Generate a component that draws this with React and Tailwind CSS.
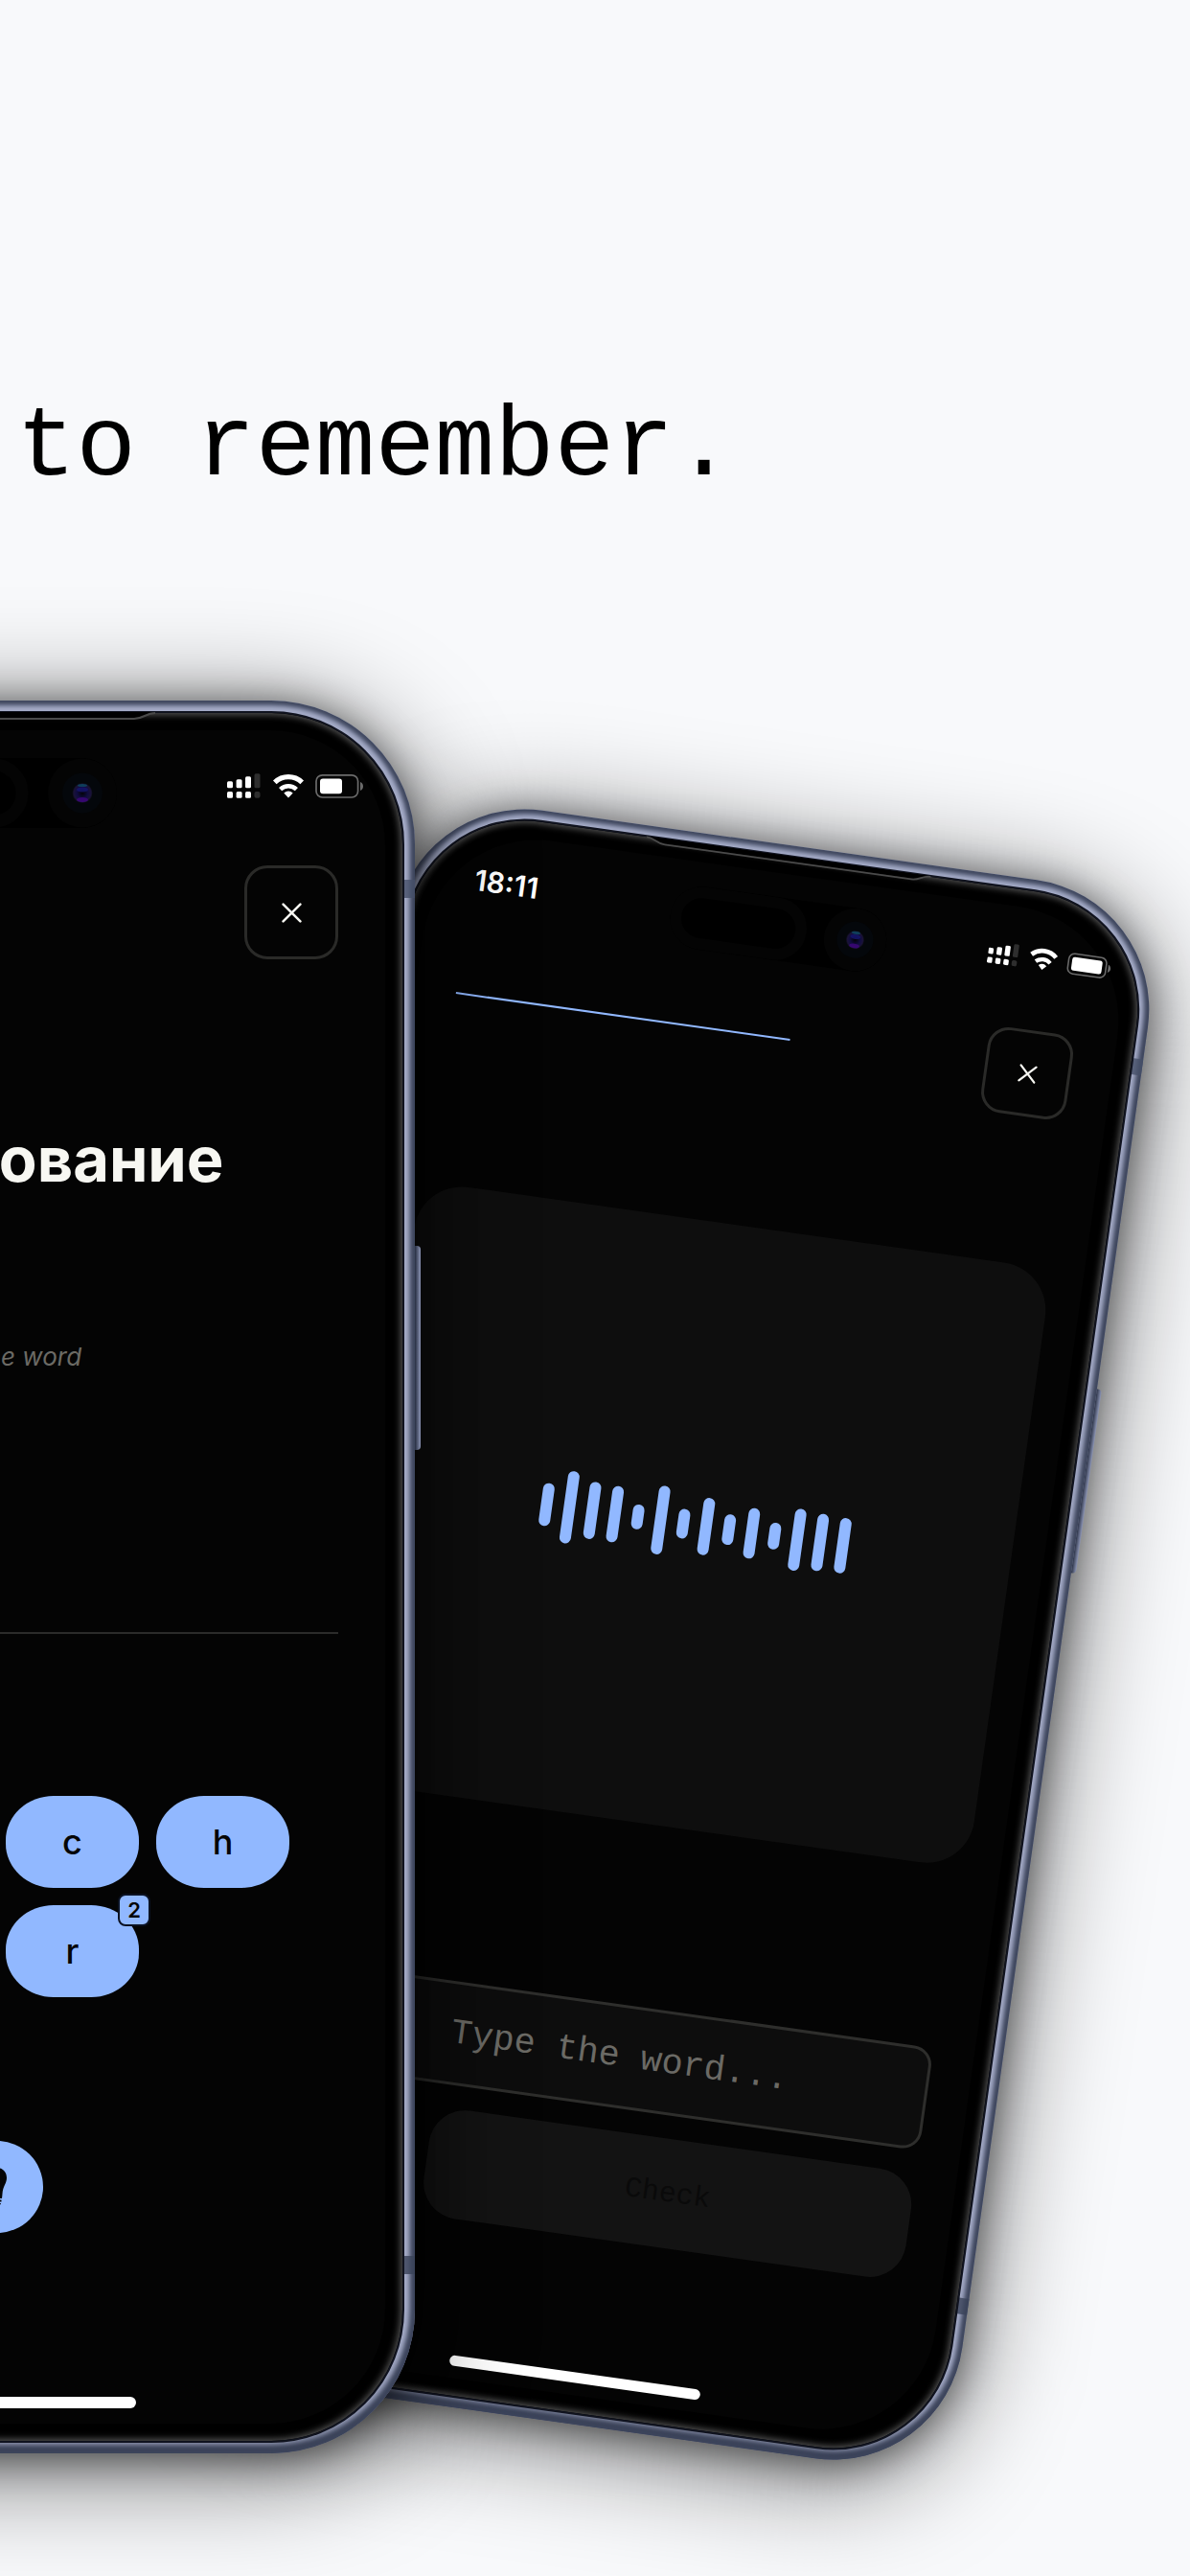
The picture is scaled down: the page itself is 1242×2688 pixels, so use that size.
import clsx from 'clsx';

const LETTERS = [
  { char: 's', count: 1 },
  { char: 'e', count: 2 },
  { char: 'c', count: 1 },
  { char: 'h', count: 1 },
  { char: 'a', count: 1 },
  { char: 'r', count: 2 },
];

const WAVE = [45, 76, 60, 59, 26, 72, 31, 60, 32, 53, 28, 65, 60, 58];

function StatusIcons({ level, className }) {
  return (
    <svg viewBox="0 0 143 26" className={className} fill="none" aria-hidden="true">
      <g fill="#fff">
        <rect x="0" y="8.3" width="6" height="7" rx="1.5" />
        <rect x="9.6" y="6.3" width="6" height="9" rx="1.5" />
        <rect x="19" y="3.3" width="6" height="12" rx="1.5" />
        <rect x="0" y="19" width="6" height="6.7" rx="1.5" />
        <rect x="9.6" y="19" width="6" height="6.7" rx="1.5" />
        <rect x="19" y="19" width="6" height="6.7" rx="1.5" />
      </g>
      <g fill="#2e2e2e">
        <rect x="28.5" y="0.3" width="6" height="15" rx="1.5" />
        <rect x="28.5" y="19" width="6" height="6.7" rx="2" />
      </g>
      <path d="M49.8 9.3A20.4 20.4 0 0 1 78.2 9.3" stroke="#fff" strokeWidth="5.2" />
      <path d="M55.6 16.6A12.4 12.4 0 0 1 72.4 16.6" stroke="#fff" strokeWidth="4.6" />
      <path d="M59.3 20.4Q64 16.4 68.7 20.4L64 25.4Z" fill="#fff" />
      <rect x="93" y="1.8" width="43.6" height="23.2" rx="6.5" stroke="#6b6b6b" strokeWidth="1.7" />
      <rect x="97" y="5.6" width={level} height="15.6" rx="3" fill="#fff" />
      <path d="M139 9C143 10.5 143 16.5 139 18Z" fill="#6b6b6b" />
    </svg>
  );
}

function Island({ className }) {
  return (
    <svg viewBox="0 0 250 73" className={className} aria-hidden="true">
      <defs>
        <radialGradient id="lens" cx="50%" cy="50%" r="50%">
          <stop offset="0" stopColor="#030308" />
          <stop offset="0.55" stopColor="#100c40" />
          <stop offset="0.85" stopColor="#1a1238" />
          <stop offset="1" stopColor="#0a0c14" />
        </radialGradient>
      </defs>
      <rect width="250" height="73" rx="36.5" fill="#000" />
      <rect x="6" y="7" width="145" height="59" rx="29.5" fill="#000" stroke="#040404" strokeWidth="13" />
      <circle cx="214" cy="36.5" r="36" fill="#040404" />
      <circle cx="214" cy="36.5" r="21" fill="#04070b" />
      <circle cx="214" cy="36.5" r="10.5" fill="url(#lens)" />
      <ellipse cx="214" cy="33" rx="6" ry="2.6" fill="#15156e" opacity="0.8" />
      <ellipse cx="214" cy="28.5" rx="5" ry="1.6" fill="#0d4a63" opacity="0.8" />
      <ellipse cx="214" cy="43.5" rx="6" ry="2.6" fill="#3a0775" opacity="0.9" />
    </svg>
  );
}

function Speaker({ className }) {
  return (
    <svg viewBox="0 0 330 9" className={className} aria-hidden="true">
      <path d="M0 0H330C320 1 318 6 308 6H22C12 6 10 1 0 0Z" fill="#000" />
      <path d="M0 1C10 1 12 7 22 7H308C318 7 320 1 330 1" fill="none" stroke="#4a4a4a" strokeWidth="2" />
    </svg>
  );
}

function CloseButton({ className, iconClassName }) {
  return (
    <button type="button" aria-label="Close" className={clsx('flex shrink-0 items-center justify-center border-[#2a2a28]', className)}>
      <svg viewBox="0 0 20 20" className={iconClassName} fill="none" stroke="#f7f7f2" strokeWidth="2.4" strokeLinecap="round">
        <path d="M1.5 1.5l17 17M18.5 1.5l-17 17" />
      </svg>
    </button>
  );
}

// Metal rim, antenna lines, side key and glass. The screen content goes on top.
function Phone({ className, rim, glass, bandTop, bandBottom, sideKey, speaker, island, children }) {
  return (
    <div className={clsx('relative shrink-0', className)}>
      <div className={clsx('absolute inset-0 translate-y-4 bg-black/60 blur-[58px]', rim)} />
      <div className={clsx('absolute inset-0 translate-y-1 bg-black/50 blur-[20px]', rim)} />
      <div className={clsx('absolute bg-[linear-gradient(90deg,#6f7793,#2d3448_55%,#8c95b5)]', sideKey)} />
      <div className={clsx('absolute inset-0 bg-[#a5acc8] shadow-[inset_0_0_5px_5px_#3d455c,inset_0_-9px_8px_#2c3347]', rim)} />
      <div className={clsx('absolute right-0 w-[12px] bg-[#465069]/80', bandTop)} />
      <div className={clsx('absolute right-0 w-[12px] bg-[#3a4259]/80', bandBottom)} />
      <div className={clsx('absolute border-2 border-[#10131f] bg-black shadow-[inset_0_0_7px_2px_#555]', glass)}>
        <div className="absolute inset-[18px] rounded-[120px] bg-[#040404]" />
      </div>
      <Speaker className={clsx('absolute left-1/2 -translate-x-1/2', speaker)} />
      <Island className={clsx('absolute left-1/2 -translate-x-1/2', island)} />
      <div className="relative flex h-full flex-col font-[Inter,sans-serif]">{children}</div>
    </div>
  );
}

function LetterKey({ char, count }) {
  return (
    <button type="button" className="relative h-24 rounded-[50px/46px] bg-[#91b8ff] text-[36px] leading-[40px] font-medium text-[#050505]">
      {char}
      {count > 1 && (
        <span className="absolute -top-3 -right-3 flex size-[34px] items-center justify-center rounded-lg border-2 border-[#0b1222] bg-[#91b8ff] text-[22px] leading-[24px] font-semibold">
          {count}
        </span>
      )}
    </button>
  );
}

function SpellScreen() {
  return (
    <Phone
      className="z-10 -ml-[439px] h-[1829px] w-[872px]"
      rim="rounded-[150px]"
      glass="inset-[11px] rounded-[139px]"
      bandTop="top-[187px] h-[19px]"
      bandBottom="bottom-[187px] h-[19px]"
      sideKey="-right-[6px] top-[569px] h-[213px] w-[12px] rounded-r-sm"
      speaker="top-[12px] w-[330px]"
      island="top-[60px] w-[250px]"
    >
      <div className="mt-[71px] flex h-9 items-center justify-between pr-[53px] pl-[86px] text-[33px] leading-[36px] font-semibold text-white">
        <span>18:10</span>
        <StatusIcons level={23} className="w-[143px]" />
      </div>
      <div className="mt-[65px] flex items-center justify-between px-20">
        <div className="h-0.5 w-[240px] bg-[#91b8ff]" />
        <CloseButton className="size-[98px] rounded-[24px] border-[3px]" iconClassName="w-[21px]" />
      </div>
      <h2 className="mt-[169px] text-center text-[65px] leading-[80px] font-bold text-[#f7f7f2]">исследование</h2>
      <p className="mt-[150px] text-center text-[26px] leading-[32px] text-[#6b6a65] italic">Build the word</p>
      <hr className="mx-20 mt-[271px] border-t-2 border-[#2b2b2a]" />
      <div className="mx-auto mt-[169px] flex w-[620px] flex-wrap justify-center gap-[18px] *:w-[139px]">
        {LETTERS.map((letter) => (
          <LetterKey key={letter.char} {...letter} />
        ))}
      </div>
      <button type="button" aria-label="Hint" className="mx-auto mt-[150px] flex size-24 items-center justify-center rounded-full bg-[#91b8ff]">
        <svg viewBox="0 0 22 42" className="w-[22px]" fill="#050505">
          <path d="M11 1C5 1 1 5.500 1 11.500C1 17 4.500 20 5.300 26C5.600 29 5.700 31 6 33H16C16.300 31 16.400 29 16.700 26C17.500 20 21 17 21 11.500C21 5.500 17 1 11 1Z" />
          <path d="M6.500 34.500H15.500V36.500H6.500ZM7 38H15C14.500 40 13 41 11 41S7.500 40 7 38Z" />
        </svg>
      </button>
      <div className="mx-auto mt-auto mb-[47px] h-3 w-[290px] rounded-full bg-white" />
    </Phone>
  );
}

function ListenScreen() {
  return (
    <Phone
      className="mt-[143px] -ml-[121px] h-[1663px] w-[793px] rotate-[8deg]"
      rim="rounded-[136px]"
      glass="inset-[10px] rounded-[126px]"
      bandTop="top-[170px] h-[17px]"
      bandBottom="bottom-[170px] h-[17px]"
      sideKey="-right-[5px] top-[517px] h-[194px] w-[11px] rounded-r-sm"
      speaker="top-[11px] w-[300px]"
      island="top-[55px] w-[227px]"
    >
      <div className="mt-[62px] flex h-[38px] items-center justify-between pr-[46px] pl-[76px] text-[30px] leading-[36px] font-semibold text-white">
        <span>18:11</span>
        <StatusIcons level={35} className="w-[130px]" />
      </div>
      <div className="mt-[56px] flex items-center justify-between px-[73px]">
        <div className="h-0.5 w-[352px] bg-[#91b8ff]" />
        <CloseButton className="size-[90px] rounded-[22px] border-[3px]" iconClassName="w-[19px]" />
      </div>
      <div className="mx-16 mt-[154px] flex h-[632px] items-center justify-center gap-3 rounded-[50px] bg-[#0e0e0e]">
        {WAVE.map((height, i) => (
          <div key={i} className="w-3 rounded-full bg-[#91b8ff]" style={{ height }} />
        ))}
      </div>
      <label htmlFor="answer" className="sr-only">Type the word</label>
      <input
        id="answer"
        type="text"
        placeholder="Type the word..."
        className="mx-[73px] mt-[190px] h-[108px] rounded-[20px] border-[3px] border-[#2e2e2c] bg-[#0d0d0d] text-center font-['Liberation_Mono',monospace] text-[37px] text-white placeholder:text-[#6b6a65]"
      />
      <div className="mx-[73px] mt-6 flex h-[114px] gap-[25px]">
        <button type="button" aria-label="Replay" className="w-[114px] shrink-0 rounded-[38px] bg-[#131313]" />
        <button type="button" disabled className="flex-1 rounded-[38px] bg-[#131313] font-['Liberation_Mono',monospace] text-[30px] leading-[36px] text-[#0a0a0a]">
          Check
        </button>
      </div>
      <div className="mx-auto mt-auto mb-[43px] h-[11px] w-[264px] rounded-full bg-white" />
    </Phone>
  );
}

export default function App() {
  return (
    <main className="min-h-screen overflow-hidden bg-[#f8f9fb] pt-[407px]">
      <h1 className="pl-[17px] font-['Liberation_Mono',monospace] text-[104px] leading-[120px] whitespace-nowrap text-black">
        to remember.
      </h1>
      <div className="mt-[204px] flex items-start pb-32">
        <SpellScreen />
        <ListenScreen />
      </div>
    </main>
  );
}
